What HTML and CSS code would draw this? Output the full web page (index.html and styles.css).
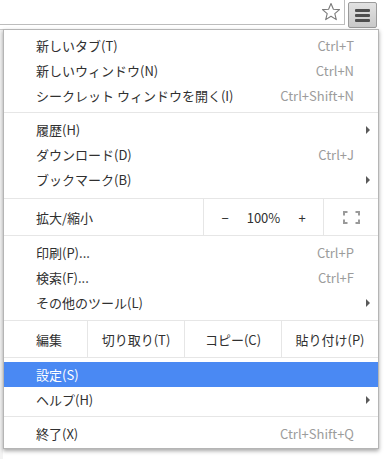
FILE: index.html
```html
<!DOCTYPE html>
<html lang="ja">
<head>
    <meta charset="UTF-8">
    <meta name="viewport" content="width=device-width, initial-scale=1.0">
    <title>Chrome メニュー</title>
    <link rel="stylesheet" href="styles.css">
</head>
<body>
    <div class="toolbar">
        <div class="omnibox">
            <svg class="star" width="20" height="20" viewBox="0 0 20 20">
                <path d="M10 1.5 L12.4 7.2 L18.5 7.6 L13.8 11.6 L15.3 17.6 L10 14.3 L4.7 17.6 L6.2 11.6 L1.5 7.6 L7.6 7.2 Z" fill="none" stroke="#7a7a7a" stroke-width="1.1" stroke-linejoin="round"/>
            </svg>
        </div>
        <button class="menu-btn" type="button">
            <span></span><span></span><span></span>
        </button>
    </div>
    <div class="page"></div>

    <div class="menu">
        <div class="item"><span class="label">新しいタブ(T)</span><span class="accel">Ctrl+T</span></div>
        <div class="item"><span class="label">新しいウィンドウ(N)</span><span class="accel">Ctrl+N</span></div>
        <div class="item"><span class="label">シークレット ウィンドウを開く(I)</span><span class="accel">Ctrl+Shift+N</span></div>
        <div class="sep"></div>
        <div class="item sub"><span class="label">履歴(H)</span><span class="arrow"></span></div>
        <div class="item"><span class="label">ダウンロード(D)</span><span class="accel">Ctrl+J</span></div>
        <div class="item sub"><span class="label">ブックマーク(B)</span><span class="arrow"></span></div>

        <div class="zoom-row">
            <div class="zoom-label">拡大/縮小</div>
            <div class="zoom-ctl">
                <span class="zoom-btn">−</span>
                <span class="zoom-value">100%</span>
                <span class="zoom-btn">+</span>
            </div>
            <div class="fullscreen">
                <svg width="17" height="13" viewBox="0 0 17 13">
                    <path d="M1 4.5 V1 H4.5 M12.5 1 H16 V4.5 M16 8.5 V12 H12.5 M4.5 12 H1 V8.5" fill="none" stroke="#9a9a9a" stroke-width="2"/>
                </svg>
            </div>
        </div>

        <div class="item"><span class="label">印刷(P)...</span><span class="accel">Ctrl+P</span></div>
        <div class="item"><span class="label">検索(F)...</span><span class="accel">Ctrl+F</span></div>
        <div class="item sub"><span class="label">その他のツール(L)</span><span class="arrow"></span></div>

        <div class="edit-row">
            <div class="edit-label">編集</div>
            <div class="edit-btn">切り取り(T)</div>
            <div class="edit-btn">コピー(C)</div>
            <div class="edit-btn">貼り付け(P)</div>
        </div>

        <div class="item active"><span class="label">設定(S)</span></div>
        <div class="item sub"><span class="label">ヘルプ(H)</span><span class="arrow"></span></div>
        <div class="sep"></div>
        <div class="item"><span class="label">終了(X)</span><span class="accel">Ctrl+Shift+Q</span></div>
    </div>
</body>
</html>
```

FILE: styles.css
```css
body {
    margin: 0;
    padding: 0;
    height: 459px;
    overflow: hidden;
    background: #ffffff;
    font-family: "Noto Sans CJK JP", "Noto Sans", sans-serif;
    font-size: 13px;
    color: #303030;
}

.toolbar {
    display: flex;
    align-items: flex-start;
    height: 29px;
    background: #ffffff;
}

.omnibox {
    width: 345px;
    height: 24px;
    margin-left: -2px;
    border: 1px solid #bdbdbd;
    border-top: none;
    background: #ffffff;
    display: flex;
    justify-content: flex-end;
    align-items: center;
}

.star {
    margin-right: 3px;
}

.menu-btn {
    width: 29px;
    height: 26px;
    margin: 2px 0 0 3px;
    padding: 0;
    border: 1px solid #9a9a9a;
    border-radius: 2px;
    background: linear-gradient(#e2e2e2, #c9c9c9);
    display: flex;
    flex-direction: column;
    justify-content: center;
    align-items: center;
    gap: 2px;
}

.menu-btn span {
    display: block;
    width: 15px;
    height: 3px;
    background: #4e4e4e;
    border-radius: 1px;
}

.page {
    width: 3px;
    height: 430px;
    background: #f3f3f3;
    border-top: 1px solid #c8c8c8;
}

/* dropdown menu */
.menu {
    position: absolute;
    left: 3px;
    top: 29px;
    width: 374px;
    padding: 3px 0 2px;
    background: #ffffff;
    border: 1px solid #b5b5b5;
    box-shadow: 0 2px 4px rgba(0, 0, 0, 0.35);
}

.item {
    display: flex;
    align-items: center;
    justify-content: space-between;
    height: 25px;
    padding: 0 24px 0 32px;
}

.item.sub {
    padding-right: 8px;
}

.item.active {
    background: #4a89f3;
    color: #ffffff;
}

.accel {
    color: #9c9c9c;
}

.arrow {
    width: 0;
    height: 0;
    border-top: 4px solid transparent;
    border-bottom: 4px solid transparent;
    border-left: 4px solid #5a5a5a;
}

.sep {
    height: 1px;
    margin: 4px 0;
    background: #e6e6e6;
}

.zoom-row,
.edit-row {
    display: flex;
    height: 36px;
    border-top: 1px solid #e6e6e6;
    border-bottom: 1px solid #e6e6e6;
}

.zoom-row {
    margin: 6px 0 4px;
}

.edit-row {
    margin: 5px 0 4px;
}

.zoom-label,
.edit-label {
    display: flex;
    align-items: center;
    padding-left: 32px;
}

.zoom-label {
    flex: 1;
}

.zoom-ctl {
    width: 120px;
    border-left: 1px solid #e6e6e6;
    display: flex;
    align-items: center;
    justify-content: space-between;
    padding: 0 16px;
    box-sizing: border-box;
}

.zoom-btn {
    width: 10px;
    text-align: center;
}

.fullscreen {
    width: 54px;
    border-left: 1px solid #e6e6e6;
    display: flex;
    align-items: center;
    justify-content: center;
}

.edit-label {
    width: 51px;
}

.edit-btn {
    flex: 1;
    border-left: 1px solid #e6e6e6;
    display: flex;
    align-items: center;
    justify-content: center;
}
```
